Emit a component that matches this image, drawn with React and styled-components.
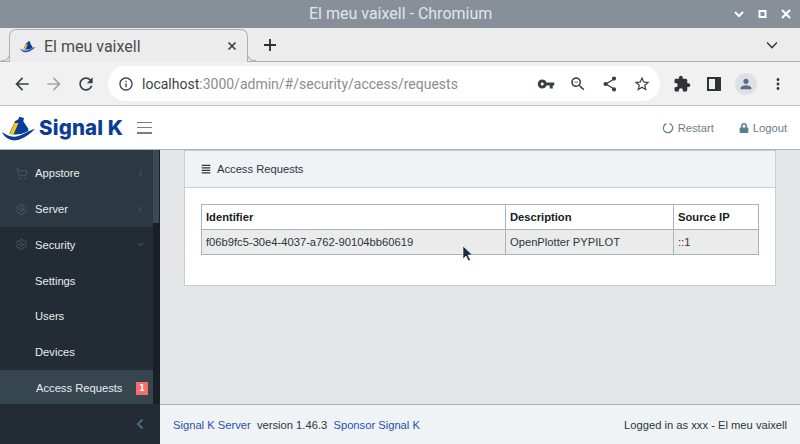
import React from 'react';
import styled, { createGlobalStyle } from 'styled-components';
import { FaLock, FaAlignJustify } from 'react-icons/fa';
import { ShoppingCart, Settings as Gear, ChevronLeft, ChevronDown } from 'lucide-react';

const GlobalStyle = createGlobalStyle`
  html, body {
    margin: 0;
    padding: 0;
    width: 800px;
    height: 444px;
    overflow: hidden;
    font-family: "Liberation Sans", Arial, sans-serif;
  }
  * { box-sizing: border-box; }
`;

const Page = styled.div`
  position: relative;
  width: 800px;
  height: 444px;
  display: flex;
  flex-direction: column;
  overflow: hidden;
`;

const TitleBar = styled.div`
  height: 28px;
  flex: none;
  background: #878f99;
  color: #e3e5e8;
  font: 400 16px/28px Roboto, sans-serif;
  display: flex;
  align-items: center;
  justify-content: space-between;
  padding: 0 8px 0 309px;
`;

const WindowButtons = styled.div`
  display: flex;
  gap: 11px;
  align-items: center;
`;

const TabStrip = styled.div`
  height: 34px;
  flex: none;
  background: #ececec;
  border-bottom: 1px solid #b0b0b0;
  display: flex;
  align-items: flex-end;
  padding: 0 22px 0 9px;
`;

const Tab = styled.div`
  position: relative;
  width: 239px;
  height: 33px;
  margin-top: 1px;
  margin-bottom: -1px;
  background: #ececec;
  border: 1px solid #b0b0b0;
  border-bottom: none;
  border-radius: 7px 7px 0 0;
  display: flex;
  align-items: center;
  padding: 0 10px 0 10px;
  gap: 7px;
  &::before, &::after {
    content: '';
    position: absolute;
    bottom: 1px;
    width: 8px;
    height: 8px;
    border-bottom: 1px solid #b0b0b0;
  }
  &::before {
    left: -9px;
    border-right: 1px solid #b0b0b0;
    border-bottom-right-radius: 7px;
  }
  &::after {
    right: -9px;
    border-left: 1px solid #b0b0b0;
    border-bottom-left-radius: 7px;
  }
`;

const TabTitle = styled.span`
  flex: 1;
  color: #4a4d50;
  font: 400 16px Roboto, sans-serif;
`;

const NewTab = styled.div`
  margin-left: 15px;
  height: 33px;
  display: flex;
  align-items: center;
`;

const TabMenu = styled.div`
  margin-left: auto;
  height: 33px;
  display: flex;
  align-items: center;
`;

const Toolbar = styled.div`
  height: 44px;
  flex: none;
  background: #f1f1f1;
  border-bottom: 1px solid #c4c4c4;
  display: flex;
  align-items: center;
  padding: 0 0 0 12px;
`;

const NavIcons = styled.div`
  display: flex;
  align-items: center;
  gap: 12px;
  margin-right: 12px;
`;

const Omnibox = styled.div`
  width: 552px;
  height: 35px;
  background: #fff;
  border-radius: 18px;
  display: flex;
  align-items: center;
  padding: 0 9px 0 10px;
`;

const Url = styled.div`
  flex: 1;
  margin-left: 8px;
  font: 400 14px Roboto, sans-serif;
  color: #8b8d90;
  white-space: nowrap;
  b {
    font-weight: 400;
    color: #3c3f42;
  }
`;

const OmniIcons = styled.div`
  display: flex;
  align-items: center;
  gap: 14px;
`;

const ExtIcons = styled.div`
  display: grid;
  grid-auto-flow: column;
  grid-auto-columns: 32px;
  justify-items: center;
  align-items: center;
  margin-left: 6px;
`;

const Avatar = styled.div`
  width: 22px;
  height: 22px;
  border-radius: 50%;
  background: #dde1e6;
  display: flex;
  align-items: center;
  justify-content: center;
`;

const AppHeader = styled.header`
  height: 44px;
  flex: none;
  background: #fff;
  border-bottom: 1px solid #a4b7c1;
  display: flex;
  align-items: center;
  padding: 0 13px 0 2px;
`;

const Brand = styled.div`
  display: flex;
  align-items: center;
  gap: 1px;
`;

const BrandName = styled.span`
  font: 800 20.5px Inter, "Liberation Sans", sans-serif;
  color: #0b3d96;
  letter-spacing: 0.15px;
  white-space: nowrap;
`;

const Burger = styled.div`
  width: 15px;
  height: 12px;
  margin-left: 14px;
  display: flex;
  flex-direction: column;
  justify-content: space-between;
  span {
    display: block;
    height: 1.5px;
    background: #6b8190;
  }
`;

const HeaderActions = styled.div`
  margin-left: auto;
  display: flex;
  align-items: center;
  gap: 25px;
`;

const HeaderLink = styled.span`
  display: flex;
  align-items: center;
  gap: 4px;
  color: #6b7d89;
  font-size: 11.2px;
`;

const Body = styled.div`
  flex: 1;
  min-height: 0;
  display: flex;
`;

const Sidebar = styled.aside`
  width: 160px;
  flex: none;
  display: flex;
  flex-direction: column;
  background: #232c34;
`;

const NavArea = styled.div`
  flex: 1;
  min-height: 0;
  display: flex;
  overflow: hidden;
`;

const NavList = styled.nav`
  width: 153px;
  flex: none;
`;

const TopGroup = styled.div`
  background: #2c3943;
  padding-top: 5.4px;
`;

const NavRow = styled.div`
  height: 35.8px;
  display: flex;
  align-items: center;
  padding: 0 8px 0 ${(p) => (p.$active ? '36px' : '15px')};
  color: #e9edf0;
  font-size: 11.2px;
  background: ${(p) => (p.$active ? '#35464f' : 'transparent')};
`;

const NavIcon = styled.span`
  width: 20px;
  display: flex;
  color: #566d7c;
`;

const NavArrow = styled.span`
  display: flex;
  color: #5a7080;
`;

const NavLabel = styled.span`
  flex: 1;
  padding-left: ${(p) => (p.$sub ? '20px' : '0')};
  white-space: nowrap;
`;

const Badge = styled.span`
  width: 12px;
  height: 13px;
  background: #f86c6b;
  color: #fff;
  font: 700 8px/13px "DejaVu Sans", sans-serif;
  text-align: center;
  margin-right: -3px;
`;

const ScrollTrack = styled.div`
  width: 7px;
  flex: none;
  background: #1a2126;
`;

const ScrollThumb = styled.div`
  width: 6px;
  height: 73px;
  background: #3a4a54;
`;

const Minimizer = styled.div`
  height: 40px;
  flex: none;
  display: flex;
  align-items: center;
  justify-content: flex-end;
  padding-right: 12px;
  color: #4c6a7c;
`;

const Main = styled.main`
  flex: 1;
  min-width: 0;
  display: flex;
  flex-direction: column;
  background: #e4e5e6;
`;

const Content = styled.div`
  flex: 1;
  min-height: 0;
  padding: 0 24px;
  overflow: hidden;
`;

const Card = styled.section`
  background: #fff;
  border: 1px solid #c2cfd6;
`;

const CardHeader = styled.div`
  height: 37px;
  background: #f0f3f5;
  border-bottom: 1px solid #c2cfd6;
  display: flex;
  align-items: center;
  gap: 6px;
  padding-left: 16px;
  color: #29363d;
  font-size: 11.2px;
`;

const CardBody = styled.div`
  padding: 16px;
  padding-bottom: 30px;
`;

const Table = styled.table`
  width: 558px;
  table-layout: fixed;
  border-collapse: collapse;
  font-size: 11.2px;
  color: #29363d;
`;

const Th = styled.th`
  height: 25px;
  border: 1px solid #a4b7c1;
  padding: 0 4px;
  text-align: left;
  font-weight: 700;
  color: #151b1e;
`;

const Td = styled.td`
  height: 25px;
  border: 1px solid #a4b7c1;
  padding: 0 4px;
  background: #ebebeb;
`;

const Footer = styled.footer`
  height: 40px;
  flex: none;
  background: #f0f3f5;
  border-top: 1px solid #a4b7c1;
  display: flex;
  align-items: center;
  justify-content: space-between;
  padding: 0 13px;
  font-size: 11.2px;
  color: #29363d;
  a {
    color: #2a4fb0;
    text-decoration: none;
  }
`;

const Pointer = styled.svg`
  position: absolute;
  left: 462px;
  top: 245px;
`;

const Mat = ({ d, size = 18, color = '#3c4043' }) => (
  <svg width={size} height={size} viewBox="0 0 24 24" fill={color}>
    <path d={d} />
  </svg>
);

const Boat = ({ width, height, wave }) => (
  <svg width={width} height={height} viewBox="0 0 36 26">
    <path d="M7.3 18.7 L13 6.3 L16.3 4.3 L17.3 1.7 L22 3 L21.3 6.3 L26.3 13.7 L26.3 16 C20 20 12 20 7.3 18.7Z" fill="#0b3d96" />
    <path d="M7.5 19.5 L11.5 19.5 L16.5 8 L12.5 8Z" fill="#f6c915" />
    <path d="M0 17 C4 20 9 22.5 14 21.5 C21 20.5 27 15 33 13.7 C29 18 22 24 14 25.3 C8 26 2 22 0 17Z" fill={wave} />
  </svg>
);

const App = () => (
  <Page>
    <GlobalStyle />
    <TitleBar>
      <span>El meu vaixell - Chromium</span>
      <WindowButtons>
        <svg width="12" height="12" viewBox="0 0 12 12" fill="none" stroke="#fff" strokeWidth="2">
          <path d="M2 4l4 4 4-4" />
        </svg>
        <svg width="13" height="12" viewBox="0 0 12 12" fill="none" stroke="#fff" strokeWidth="2">
          <rect x="3" y="3" width="6" height="6" />
        </svg>
        <svg width="12" height="12" viewBox="0 0 12 12" fill="none" stroke="#fff" strokeWidth="2.2">
          <path d="M2 2l8 8M10 2l-8 8" />
        </svg>
      </WindowButtons>
    </TitleBar>
    <TabStrip>
      <Tab>
        <Boat width={17} height={13} wave="#1f55c0" />
        <TabTitle>El meu vaixell</TabTitle>
        <svg width="10" height="10" viewBox="0 0 10 10" stroke="#3c4043" strokeWidth="1.7">
          <path d="M1.5 1.5l7 7M8.5 1.5l-7 7" />
        </svg>
      </Tab>
      <NewTab>
        <svg width="14" height="14" viewBox="0 0 14 14" stroke="#2b2d30" strokeWidth="1.8">
          <path d="M7 1v12M1 7h12" />
        </svg>
      </NewTab>
      <TabMenu>
        <svg width="12" height="8" viewBox="0 0 12 8" fill="none" stroke="#3c4043" strokeWidth="1.6">
          <path d="M1 1.5l5 5 5-5" />
        </svg>
      </TabMenu>
    </TabStrip>
    <Toolbar>
      <NavIcons>
        <Mat size={20} d="M20 11H7.83l5.59-5.59L12 4l-8 8 8 8 1.41-1.41L7.83 13H20v-2z" />
        <Mat size={20} color="#a3a5a8" d="M4 11h12.17l-5.59-5.59L12 4l8 8-8 8-1.41-1.41L16.17 13H4v-2z" />
        <Mat size={20} d="M17.65 6.35C16.2 4.9 14.21 4 12 4c-4.42 0-7.99 3.58-7.99 8s3.57 8 7.99 8c3.73 0 6.84-2.55 7.73-6h-2.08c-.82 2.33-3.04 4-5.65 4-3.31 0-6-2.69-6-6s2.69-6 6-6c1.66 0 3.14.69 4.22 1.78L13 11h7V4l-2.35 2.35z" />
      </NavIcons>
      <Omnibox>
        <Mat size={16} d="M11 7h2v2h-2zm0 4h2v6h-2zm1-9C6.48 2 2 6.48 2 12s4.48 10 10 10 10-4.48 10-10S17.52 2 12 2zm0 18c-4.41 0-8-3.59-8-8s3.59-8 8-8 8 3.59 8 8-3.59 8-8 8z" />
        <Url>
          <b>localhost</b>:3000/admin/#/security/access/requests
        </Url>
        <OmniIcons>
          <Mat size={18} d="M12.65 10C11.83 7.67 9.61 6 7 6c-3.31 0-6 2.69-6 6s2.69 6 6 6c2.61 0 4.83-1.67 5.65-4H17v4h4v-4h2v-4H12.65zM7 14c-1.1 0-2-.9-2-2s.9-2 2-2 2 .9 2 2-.9 2-2 2z" />
          <Mat size={18} d="M15.5 14h-.79l-.28-.27C15.41 12.59 16 11.11 16 9.5 16 5.91 13.09 3 9.5 3S3 5.91 3 9.5 5.91 16 9.5 16c1.61 0 3.09-.59 4.23-1.57l.27.28v.79l5 4.99L20.49 19l-4.99-5zm-6 0C7.01 14 5 11.99 5 9.5S7.01 5 9.5 5 14 7.01 14 9.5 11.99 14 9.5 14zM7 9h5v1H7z" />
          <svg width="18" height="18" viewBox="0 0 18 18" fill="#3c4043" stroke="#3c4043" strokeWidth="1.4">
            <path d="M13 4L5 9l8 5" fill="none" />
            <circle cx="13" cy="3.6" r="1.4" />
            <circle cx="4.6" cy="9" r="1.4" />
            <circle cx="13" cy="14.4" r="1.4" />
          </svg>
          <Mat size={18} d="M22 9.24l-7.19-.62L12 2 9.19 8.63 2 9.24l5.46 4.73L5.82 21 12 17.27 18.18 21l-1.63-7.03L22 9.24zM12 15.4l-3.76 2.27 1-4.28-3.32-2.88 4.38-.38L12 6.1l1.71 4.04 4.38.38-3.32 2.88 1 4.28L12 15.4z" />
        </OmniIcons>
      </Omnibox>
      <ExtIcons>
        <Mat size={18} color="#2f3236" d="M20.5 11H19V7c0-1.1-.9-2-2-2h-4V3.5C13 2.12 11.88 1 10.5 1S8 2.12 8 3.5V5H4c-1.1 0-1.99.9-1.99 2v3.8H3.5c1.49 0 2.7 1.21 2.7 2.7s-1.21 2.7-2.7 2.7H2V20c0 1.1.9 2 2 2h3.8v-1.5c0-1.49 1.21-2.7 2.7-2.7 1.49 0 2.7 1.21 2.7 2.7V22H17c1.1 0 2-.9 2-2v-4h1.5c1.38 0 2.5-1.12 2.5-2.5S21.88 11 20.5 11z" />
        <svg width="14" height="14" viewBox="0 0 14 14" fill="none" stroke="#2f3236" strokeWidth="2">
          <rect x="1" y="1" width="12" height="12" />
          <rect x="9" y="1" width="4" height="12" fill="#2f3236" />
        </svg>
        <Avatar>
          <Mat size={16} color="#5a6d84" d="M12 12c2.21 0 4-1.79 4-4s-1.79-4-4-4-4 1.79-4 4 1.79 4 4 4zm0 2c-2.67 0-8 1.34-8 4v2h16v-2c0-2.66-5.33-4-8-4z" />
        </Avatar>
        <Mat size={18} d="M12 8c1.1 0 2-.9 2-2s-.9-2-2-2-2 .9-2 2 .9 2 2 2zm0 2c-1.1 0-2 .9-2 2s.9 2 2 2 2-.9 2-2-.9-2-2-2zm0 6c-1.1 0-2 .9-2 2s.9 2 2 2 2-.9 2-2-.9-2-2-2z" />
      </ExtIcons>
    </Toolbar>
    <AppHeader>
      <Brand>
        <Boat width={36} height={26} wave="#0b3d96" />
        <BrandName>Signal K</BrandName>
      </Brand>
      <Burger>
        <span />
        <span />
        <span />
      </Burger>
      <HeaderActions>
        <HeaderLink>
          <svg width="12" height="12" viewBox="0 0 12 12" fill="none" stroke="#5d7c90" strokeWidth="1.3">
            <circle cx="6" cy="6" r="4.6" strokeDasharray="25 4" transform="rotate(-70 6 6)" />
          </svg>
          Restart
        </HeaderLink>
        <HeaderLink>
          <FaLock size={10} color="#5d7c90" />
          Logout
        </HeaderLink>
      </HeaderActions>
    </AppHeader>
    <Body>
      <Sidebar>
        <NavArea>
          <NavList>
            <TopGroup>
              <NavRow>
                <NavIcon><ShoppingCart size={13} strokeWidth={1} /></NavIcon>
                <NavLabel>Appstore</NavLabel>
                <NavArrow><ChevronLeft size={9} /></NavArrow>
              </NavRow>
              <NavRow>
                <NavIcon><Gear size={13} strokeWidth={1.2} /></NavIcon>
                <NavLabel>Server</NavLabel>
                <NavArrow><ChevronLeft size={9} /></NavArrow>
              </NavRow>
            </TopGroup>
            <NavRow>
              <NavIcon><Gear size={13} strokeWidth={1.2} /></NavIcon>
              <NavLabel>Security</NavLabel>
              <NavArrow><ChevronDown size={9} /></NavArrow>
            </NavRow>
            <NavRow><NavLabel $sub>Settings</NavLabel></NavRow>
            <NavRow><NavLabel $sub>Users</NavLabel></NavRow>
            <NavRow><NavLabel $sub>Devices</NavLabel></NavRow>
            <NavRow $active>
              <NavLabel>Access Requests</NavLabel>
              <Badge>1</Badge>
            </NavRow>
          </NavList>
          <ScrollTrack>
            <ScrollThumb />
          </ScrollTrack>
        </NavArea>
        <Minimizer>
          <ChevronLeft size={16} strokeWidth={3} />
        </Minimizer>
      </Sidebar>
      <Main>
        <Content>
          <Card>
            <CardHeader>
              <FaAlignJustify size={10} color="#29363d" />
              Access Requests
            </CardHeader>
            <CardBody>
              <Table>
                <colgroup>
                  <col style={{ width: 304 }} />
                  <col style={{ width: 168 }} />
                  <col style={{ width: 85 }} />
                </colgroup>
                <thead>
                  <tr>
                    <Th>Identifier</Th>
                    <Th>Description</Th>
                    <Th>Source IP</Th>
                  </tr>
                </thead>
                <tbody>
                  <tr>
                    <Td>f06b9fc5-30e4-4037-a762-90104bb60619</Td>
                    <Td>OpenPlotter PYPILOT</Td>
                    <Td>::1</Td>
                  </tr>
                </tbody>
              </Table>
            </CardBody>
          </Card>
        </Content>
        <Footer>
          <span>
            <a href="#server">Signal K Server</a>
            {'\u00a0 version 1.46.3\u00a0 '}
            <a href="#sponsor">Sponsor Signal K</a>
          </span>
          <span>Logged in as xxx - El meu vaixell</span>
        </Footer>
      </Main>
    </Body>
    <Pointer width="12" height="18" viewBox="0 0 12 18">
      <path d="M1 1v13l3-3 2.5 5 2-1-2.5-5h4.5z" fill="#1c2a45" stroke="#fff" strokeWidth="0.6" />
    </Pointer>
  </Page>
);

export default App;
